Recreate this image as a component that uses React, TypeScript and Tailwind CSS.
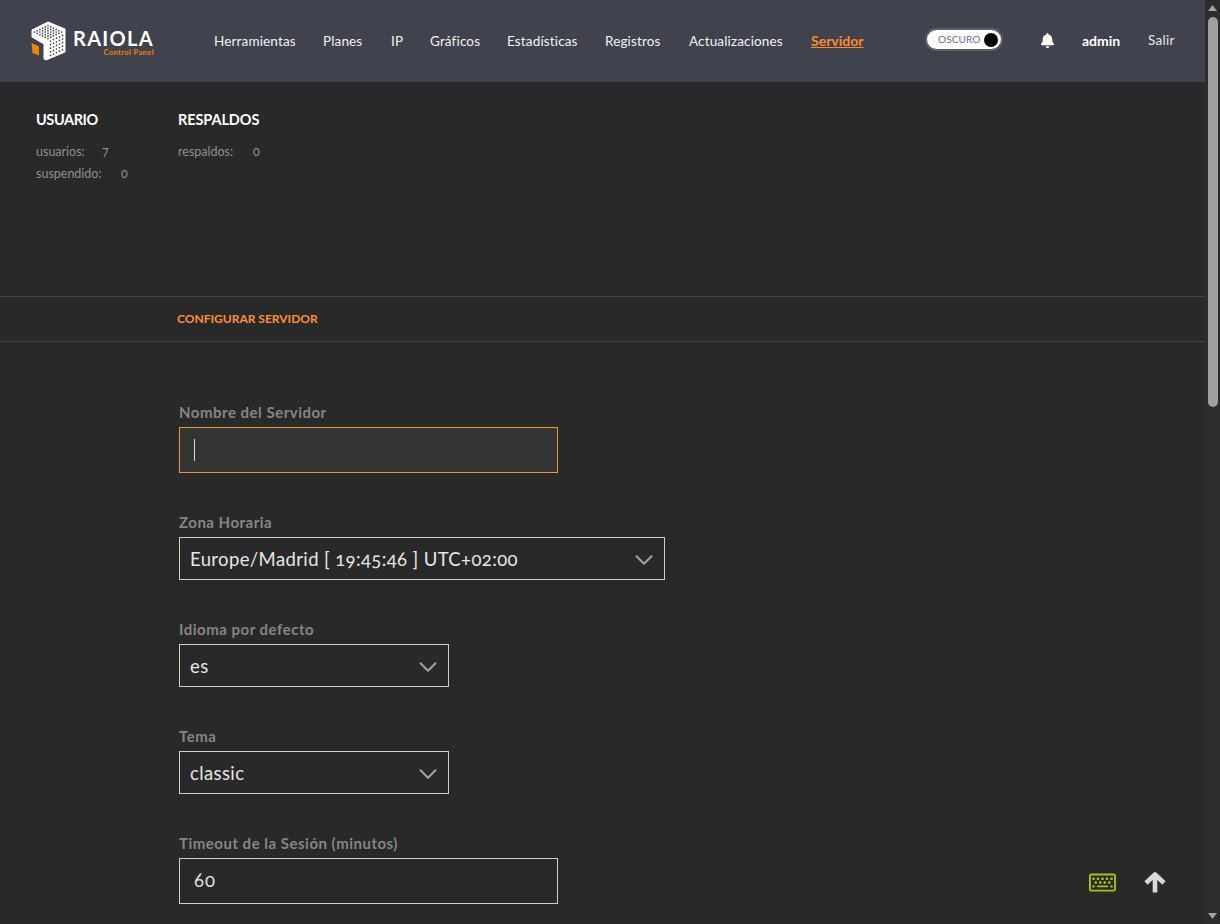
import { ChevronDown } from "lucide-react";
import { FaBell, FaRegKeyboard } from "react-icons/fa";

const NAV = [
  { label: "Herramientas", width: "w-[82px]" },
  { label: "Planes", width: "w-[41px]" },
  { label: "IP", width: "w-[12px]" },
  { label: "Gráficos", width: "w-[50px]" },
  { label: "Estadísticas", width: "w-[71px]" },
  { label: "Registros", width: "w-[57px]" },
  { label: "Actualizaciones", width: "w-[95px]" },
];

const font = "font-['Lato','Open_Sans',sans-serif]";

function Logo() {
  const dots = [];
  for (let i = 0; i < 6; i++) {
    for (let j = 0; j < 6; j++) {
      dots.push(<circle key={`t${i}${j}`} cx={17 + (i - j) * 2.7} cy={4.5 + (i + j) * 1.3} r="0.85" fill="#40424e" />);
      if (i < 5 && j < 5) {
        dots.push(<circle key={`r${i}${j}`} cx={19.5 + i * 3} cy={20 + j * 3.6 - i * 1.4} r="0.85" fill="#40424e" />);
      }
    }
  }
  return (
    <svg width="36" height="40" viewBox="0 0 36 40" className="shrink-0">
      <path d="M17 1 L34 8 V31 L15 39 L13 38 V23 L1 16 V9 Z" fill="#ffffff" stroke="#ffffff" strokeLinejoin="round" />
      <path d="M0.5 22 L8 25.5 V34.5 L1.5 32 Z" fill="#f08300" />
      {dots}
    </svg>
  );
}

function Field({ label, children, className }: { label: string; children: React.ReactNode; className: string }) {
  return (
    <div className={className}>
      <div className="h-[21px] text-[15px] leading-[21px] font-bold tracking-[0.5px] text-[#858585]">{label}</div>
      {children}
    </div>
  );
}

function SelectBox({ value, className }: { value: string; className: string }) {
  return (
    <div className={`mt-[4px] flex h-[43px] items-center justify-between border border-[#d0d0d0] pl-[10px] pr-[5px] text-[18.5px] tracking-[0.38px] text-[#e6e6e6] ${className}`}>
      <span className="pt-[2px]">{value}</span>
      <ChevronDown size={30} strokeWidth={1.6} className="mt-[3px] text-[#a3a3a3]" />
    </div>
  );
}

export default function App() {
  return (
    <div className={`flex h-[924px] w-full overflow-hidden bg-[#292929] oldstyle-nums ${font}`}>
      <div className="relative min-w-0 flex-1">
        <header className="flex h-[82px] items-center bg-[#40424e] pl-[31px]">
          <div className="flex w-[183px] items-center gap-[6px]">
            <Logo />
            <div className="flex flex-col">
              <span className="text-[20px] leading-[22px] font-bold tracking-[1.3px] text-white">RAIOLA</span>
              <span className="self-end text-[7.5px] leading-[7px] font-bold tracking-[0.4px] text-[#f08300]">Control Panel</span>
            </div>
          </div>
          <nav className="flex items-center gap-[27px] text-[13.5px] tracking-[0.15px] text-[#f2f2f2]">
            {NAV.map((n) => (
              <span key={n.label} className={`${n.width} whitespace-nowrap`}>{n.label}</span>
            ))}
            <span className="mb-[1px] w-[53px] whitespace-nowrap text-[14px] font-bold tracking-normal text-[#ff8a2b] underline">Servidor</span>
          </nav>
          <div className="mb-[3px] ml-[61px] flex h-[23px] w-[78px] items-center justify-between rounded-full border-[2px] border-[#5c5e68] bg-white pl-[11px] pr-[3px]">
            <span className="text-[10.2px] text-[#6b7280]">OSCURO</span>
            <span className="h-[14px] w-[14px] rounded-full bg-black" />
          </div>
          <FaBell size={15} className="mb-[2px] ml-[37px] text-white" />
          <span className="mb-[2px] ml-[27px] w-[39px] text-[14px] font-bold whitespace-nowrap text-white">admin</span>
          <span className="mb-[2px] ml-[27px] text-[13.5px] tracking-[0.3px] text-[#e8e8e8]">Salir</span>
        </header>

        <section className="flex h-[214px] pl-[36px] pt-[29px]">
          <div className="w-[142px]">
            <h3 className="text-[14.5px] leading-[18px] font-bold tracking-[-0.4px] text-white">USUARIO</h3>
            <div className="mt-[12px] flex text-[12.5px] leading-[22px] text-[#8f8f8f]">
              <span className="w-[66px]">usuarios:</span>
              <span>7</span>
            </div>
            <div className="flex text-[12.5px] leading-[22px] text-[#8f8f8f]">
              <span className="w-[85px]">suspendido:</span>
              <span>0</span>
            </div>
          </div>
          <div>
            <h3 className="text-[14.5px] leading-[18px] font-bold tracking-[-0.1px] text-white">RESPALDOS</h3>
            <div className="mt-[12px] flex text-[12.5px] leading-[22px] text-[#8f8f8f]">
              <span className="w-[75px]">respaldos:</span>
              <span>0</span>
            </div>
          </div>
        </section>

        <div className="flex h-[46px] items-center border-y border-[#424242] pl-[177px]">
          <span className="text-[12px] font-bold text-[#ff8f33]">CONFIGURAR SERVIDOR</span>
        </div>

        <main className="pl-[179px] pt-[60px]">
          <Field label="Nombre del Servidor" className="">
            <div className="mt-[4px] flex h-[46px] w-[379px] items-center border border-[#f0953a] bg-[#343434] pl-[14px]">
              <span className="h-[22px] w-px bg-[#d8d8d8]" />
            </div>
          </Field>
          <Field label="Zona Horaria" className="mt-[39px]">
            <SelectBox value="Europe/Madrid [ 19:45:46 ] UTC+02:00" className="w-[486px]" />
          </Field>
          <Field label="Idioma por defecto" className="mt-[39px]">
            <SelectBox value="es" className="w-[270px]" />
          </Field>
          <Field label="Tema" className="mt-[39px]">
            <SelectBox value="classic" className="w-[270px]" />
          </Field>
          <Field label="Timeout de la Sesión (minutos)" className="mt-[39px]">
            <div className="mt-[4px] flex h-[46px] w-[379px] items-center border border-[#d0d0d0] pl-[14px] text-[18.5px] tracking-[1px] text-[#e0e0e0]">60</div>
          </Field>
        </main>

        <FaRegKeyboard size={27} className="absolute left-[1089px] top-[869px] text-[#a4c414]" />
        <svg width="24" height="22" viewBox="0 0 24 22" className="absolute left-[1143px] top-[872px]">
          <path d="M3 11 L12 2.5 L21 11 M12 3.5 V20.5" fill="none" stroke="#d9d9d9" strokeWidth="4.6" strokeLinejoin="round" />
        </svg>
      </div>

      <div className="flex w-[15px] shrink-0 flex-col items-center bg-[#2c2c2c]">
        <svg width="15" height="17" viewBox="0 0 15 17" className="shrink-0"><path d="M7.5 5 L12 11 H3 Z" fill="#a3a3a3" /></svg>
        <div className="h-[390px] w-[10px] rounded-full bg-[#9f9f9f]" />
        <div className="flex-1" />
        <svg width="15" height="17" viewBox="0 0 15 17" className="shrink-0"><path d="M7.5 12 L12 6 H3 Z" fill="#a3a3a3" /></svg>
      </div>
    </div>
  );
}
